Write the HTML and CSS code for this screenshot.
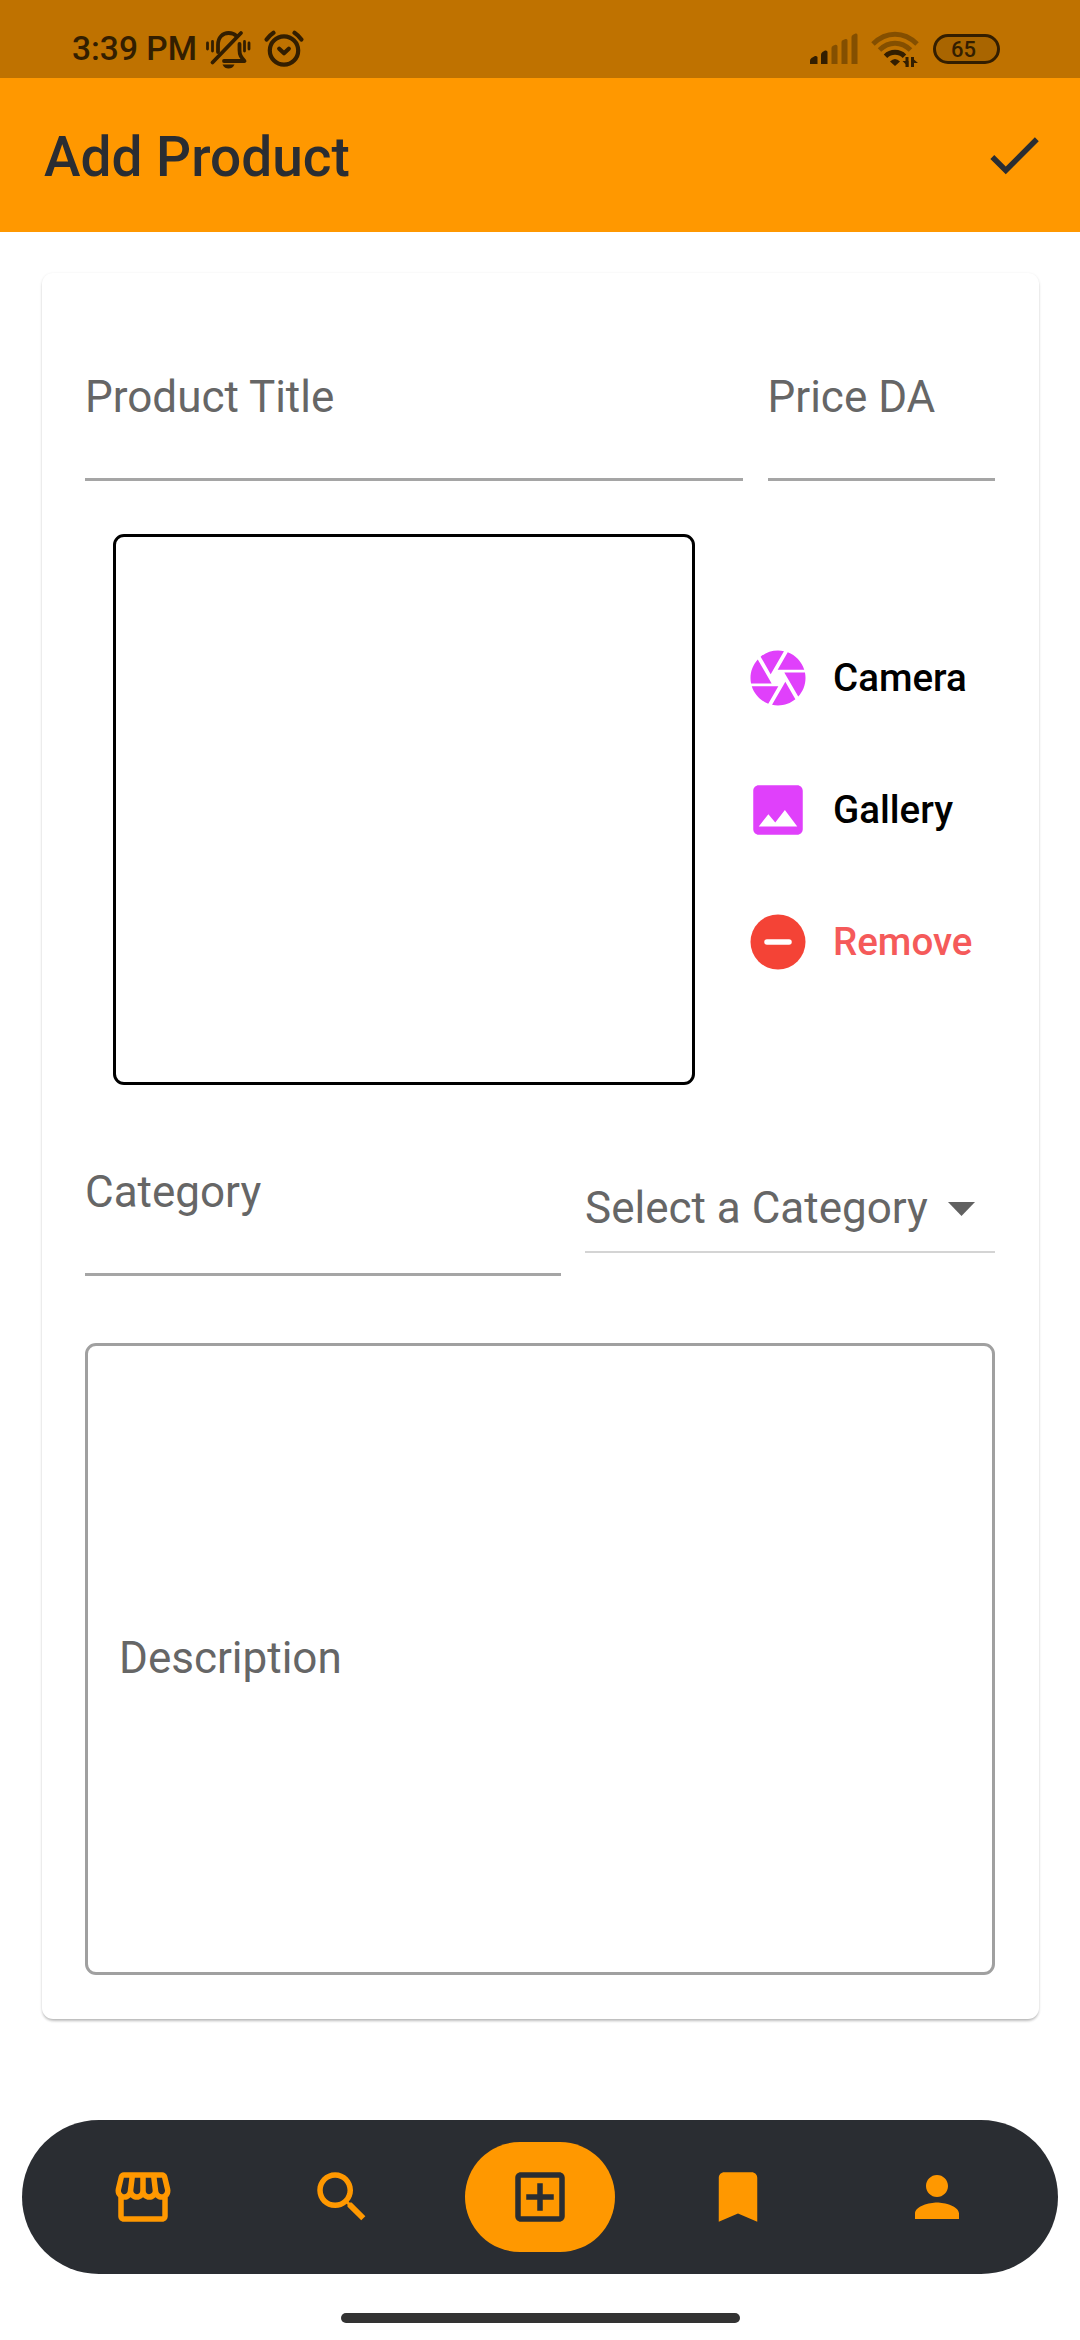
FILE: index.html
```html
<!DOCTYPE html>
<html lang="en">
<head>
<meta charset="utf-8">
<title>Add Product</title>
<link rel="stylesheet" href="styles.css">
</head>
<body>
<div class="screen">
  <header>
    <div class="status">
      <span class="time">3:39 PM</span>
      <svg class="mute" width="46" height="40" viewBox="0 0 46 40" fill="none" stroke="currentColor" stroke-width="3.8" stroke-linecap="round">
        <path d="M7.5 33.5 36 4"/>
        <path d="M13 23V16C13 8 18 4 23.500 4C27 4 29.500 5 31.500 7"/>
        <path d="M34.500 15V21C34.500 26 36 28 39.500 32H19" stroke-linejoin="round"/>
        <path d="M17.500 35.500H29.500C28 38.500 26 39.500 23.500 39.500S19 38.500 17.500 35.500Z" fill="currentColor" stroke="none"/>
        <path d="M2.500 14V20M7.500 12.500V22M39.500 12.500V22M44 14V20" stroke-width="2.800"/>
      </svg>
      <svg class="alarm" width="40" height="38" viewBox="0 0 40 38" fill="none" stroke="currentColor" stroke-width="4.200" stroke-linecap="round" stroke-linejoin="round">
        <circle cx="20" cy="20.500" r="14.200"/>
        <path d="M2.600 9.500Q5.500 5.500 9.500 2.800M37.400 9.500Q34.500 5.500 30.500 2.800"/>
        <path d="M15.200 18.800 20 23.300 24.800 18.800"/>
      </svg>
      <span class="spacer"></span>
      <svg class="signal" width="48" height="32" viewBox="0 0 48 32" fill="currentColor">
        <path d="M0 31V27.500Q0 26 1.500 25L5 23Q7.500 22.500 7.500 24.500V31Z"/>
        <path d="M11 31V21.500Q11 20 12.500 19L15 17.500Q17.500 17 17.500 19V31Z"/>
        <path opacity=".42" d="M21.500 31V15Q21.500 13.500 23 12.800L25.500 11.800Q27.500 11.500 27.500 13.500V31ZM31.500 31V9Q31.500 7.500 33 7L35.500 6Q37.500 5.500 37.500 7.500V31ZM41.500 31V4Q41.500 2.500 43 1.800L45.500.6Q47.500 0 47.500 2V31Z"/>
      </svg>
      <svg class="wifi" width="48" height="36" viewBox="0 0 48 36" fill="none" stroke="currentColor" stroke-width="5">
        <path opacity=".42" d="M2 13Q12 3.300 24 3.300T46 13M8.500 19Q15.500 12.300 24 12.300T39.500 19"/>
        <path d="M14.500 25.200Q18.500 21.300 24 21.300T33.500 25.200"/>
        <path d="M19 30.500Q24 25.500 29 30.500L24 35Z" fill="currentColor" stroke="none"/>
        <path d="M36 26V36M41.500 26V36" stroke-width="3"/>
        <path d="M37.500 36 31.500 30H37.500ZM40 26 47 32H40Z" fill="currentColor" stroke="none"/>
      </svg>
      <span class="battery">65</span>
    </div>
    <div class="appbar">
      <h1>Add Product</h1>
      <svg class="icon" viewBox="0 0 24 24"><path d="M9 16.170 4.830 12l-1.420 1.410L9 19 21 7l-1.410-1.410z"/></svg>
    </div>
  </header>

  <main class="card">
    <div class="row">
      <div class="field title">Product Title</div>
      <div class="field price">Price DA</div>
    </div>
    <div class="media">
      <div class="preview"></div>
      <div class="actions">
        <div class="action">
          <svg class="icon pink" viewBox="0 0 24 24"><path d="M9.400 10.500l4.770-8.260C13.470 2.090 12.750 2 12 2c-2.400 0-4.600.85-6.320 2.250l3.660 6.350.06-.1zM21.540 9c-.92-2.920-3.150-5.260-6-6.340L11.880 9h9.660zm.26 1h-7.490l.29.5 4.760 8.250C21 16.970 22 14.610 22 12c0-.69-.07-1.350-.2-2zM8.540 12l-3.900-6.750C3.010 7.030 2 9.390 2 12c0 .69.07 1.350.2 2h7.490l-1.150-2zm-6.080 3c.92 2.920 3.150 5.260 6 6.340L12.120 15H2.460zm11.270 0l-3.900 6.760c.7.15 1.420.24 2.170.24 2.400 0 4.600-.85 6.320-2.250l-3.660-6.350-.93 1.600z"/></svg>
          <span>Camera</span>
        </div>
        <div class="action">
          <svg class="icon pink" viewBox="0 0 24 24"><path d="M21 19V5c0-1.100-.9-2-2-2H5c-1.100 0-2 .9-2 2v14c0 1.100.9 2 2 2h14c1.100 0 2-.9 2-2zM8.500 13.500l2.500 3.010L14.500 12l4.500 6H5l3.500-4.500z"/></svg>
          <span>Gallery</span>
        </div>
        <div class="action remove">
          <svg class="icon red" viewBox="0 0 24 24"><circle cx="12" cy="12" r="10"/><rect x="7" y="11" width="10" height="2" rx="1" fill="#fff"/></svg>
          <span>Remove</span>
        </div>
      </div>
    </div>
    <div class="row category-row">
      <div class="field category">Category</div>
      <div class="select"><span>Select a Category</span><svg width="27" height="14" viewBox="0 0 27 14"><path d="M0 0H27L13.500 14Z"/></svg></div>
    </div>
    <div class="description">Description</div>
  </main>

  <nav>
    <a class="tab"><svg class="icon" viewBox="0 0 24 24"><path d="M21.900 8.890l-1.050-4.370c-.22-.9-1-1.520-1.910-1.520H5.050c-.9 0-1.690.63-1.900 1.520L2.100 8.890c-.24 1.020-.02 2.060.62 2.880.08.11.19.19.28.29V19c0 1.100.9 2 2 2h14c1.100 0 2-.9 2-2v-6.940c.09-.09.2-.18.28-.28.64-.82.87-1.870.62-2.890zm-2.990-3.900l1.050 4.370c.1.42.01.84-.25 1.170-.14.18-.44.47-.94.47-.61 0-1.140-.49-1.210-1.140L16.980 5l1.930-.01zM13 5h1.960l.54 4.520c.05.39-.07.78-.33 1.070-.22.26-.54.41-.95.41-.67 0-1.220-.59-1.220-1.310V5zM8.490 9.520L9.040 5H11v4.690c0 .72-.55 1.310-1.290 1.310-.34 0-.65-.15-.89-.41-.25-.29-.37-.68-.33-1.070zm-4.450-.16L5.050 5h1.970l-.58 4.860c-.08.65-.6 1.140-1.210 1.140-.49 0-.8-.29-.93-.47-.27-.32-.36-.75-.26-1.170zM5 19v-6.030c.08.01.15.03.23.03.87 0 1.660-.36 2.240-.95.6.6 1.400.95 2.310.95.87 0 1.650-.36 2.230-.93.59.57 1.390.93 2.290.93.84 0 1.640-.35 2.240-.95.58.59 1.370.95 2.240.95.08 0 .15-.02.23-.03V19H5z"/></svg></a>
    <a class="tab"><svg class="icon" viewBox="0 0 24 24"><path d="M15.500 14h-.79l-.28-.27C15.410 12.590 16 11.110 16 9.500 16 5.910 13.090 3 9.500 3S3 5.910 3 9.500 5.910 16 9.500 16c1.610 0 3.090-.59 4.230-1.570l.27.28v.79l5 4.990L20.490 19l-4.990-5zm-6 0C7.010 14 5 11.990 5 9.500S7.010 5 9.500 5 14 7.010 14 9.500 11.990 14 9.500 14z"/></svg></a>
    <a class="tab active"><svg class="icon" viewBox="0 0 24 24"><path d="M19 3H5c-1.110 0-2 .9-2 2v14c0 1.100.89 2 2 2h14c1.100 0 2-.9 2-2V5c0-1.100-.9-2-2-2zm0 16H5V5h14v14zm-8-2h2v-4h4v-2h-4V7h-2v4H7v2h4z"/></svg></a>
    <a class="tab"><svg class="icon" viewBox="0 0 24 24"><path d="M17 3H7c-1.100 0-1.990.9-1.990 2L5 21l7-3 7 3V5c0-1.100-.9-2-2-2z"/></svg></a>
    <a class="tab"><svg class="icon" viewBox="0 0 24 24"><path d="M12 12c2.210 0 4-1.790 4-4s-1.790-4-4-4-4 1.790-4 4 1.790 4 4 4zm0 2c-2.670 0-8 1.340-8 4v2h16v-2c0-2.660-5.330-4-8-4z"/></svg></a>
  </nav>
  <div class="handle"></div>
</div>
</body>
</html>
```
FILE: styles.css
```css
* { box-sizing: border-box; }

body {
  margin: 0;
  background: #fff;
  font-family: Roboto, sans-serif;
}

.screen {
  width: 1080px;
  height: 2340px;
  display: flex;
  flex-direction: column;
  overflow: hidden;
}

svg { display: block; flex: none; }

.icon { width: 66px; height: 66px; fill: currentColor; }

.status {
  height: 78px;
  padding: 19px 80px 0 72px;
  display: flex;
  align-items: center;
  background: #bf7200;
  color: #331e00;
}
.time { width: 126px; padding-top: 1px; font-size: 33.500px; font-weight: 500; line-height: 40px; white-space: nowrap; }
.mute { margin-left: 7px; }
.alarm { margin-left: 13px; }
.spacer { flex: 1; }
.wifi { margin-left: 13px; }
.battery {
  width: 67px;
  height: 30px;
  margin-left: 14px;
  padding-right: 6px;
  border: 3px solid #331e00;
  border-radius: 15px;
  background: #a96500;
  font-size: 22px;
  font-weight: 500;
  line-height: 25px;
  text-align: center;
}

.appbar {
  height: 154px;
  padding: 0 33px 0 44px;
  display: flex;
  align-items: center;
  justify-content: space-between;
  background: #ff9800;
  color: #2a2d32;
}
h1 { margin: 0; padding-top: 3px; font-size: 55px; font-weight: 500; line-height: 64px; }

.card {
  width: 997px;
  height: 1746px;
  margin: 41px 41px 0 42px;
  padding: 98px 44px 44px 43px;
  border-radius: 11px;
  background: #fff;
  box-shadow: 0 3px 3px -1px rgba(0,0,0,.2), 0 1px 3px rgba(0,0,0,.14);
  color: #666;
  font-size: 44px;
  line-height: 52px;
  display: flex;
  flex-direction: column;
}

.row { display: flex; gap: 24.500px; }
.field { height: 110px; border-bottom: 3px solid #a5a5a5; white-space: nowrap; }
.title { flex: 1; }
.price { width: 227.500px; }

.media { display: flex; margin: 53px 0 0 28px; }
.preview {
  width: 582px;
  height: 551px;
  border: 3px solid #000;
  border-radius: 11px;
}
.actions {
  margin-left: 50px;
  display: flex;
  flex-direction: column;
  justify-content: center;
}
.action {
  height: 132px;
  display: flex;
  align-items: center;
  gap: 22px;
  color: #000;
  font-size: 38.500px;
  font-weight: 500;
}
.pink { color: #e040fb; }
.red { color: #f44336; }
.remove { color: #f55a5a; }

.category-row { margin-top: 81px; }
.category { flex: 1; }
.select {
  width: 410px;
  height: 71px;
  margin-top: 16px;
  padding-right: 20px;
  border-bottom: 2px solid #d4d4d4;
  display: flex;
  align-items: flex-start;
  justify-content: space-between;
}
.select svg { margin-top: 20px; fill: #616161; }

.description {
  flex: 1;
  margin: 67px 0 0;
  padding: 0 0 3px 31px;
  border: 3px solid #a0a0a0;
  border-radius: 11px;
  display: flex;
  align-items: center;
}

nav {
  height: 154px;
  margin: 101px 22px 0;
  padding: 0 22px;
  border-radius: 77px;
  display: flex;
  align-items: center;
  justify-content: space-around;
  background: #2a2d32;
}
.tab {
  width: 150px;
  height: 110px;
  border-radius: 55px;
  display: flex;
  align-items: center;
  justify-content: center;
  color: #ff9800;
}
.active { background: #ff9800; color: #2a2d32; }

.handle {
  width: 399px;
  height: 10px;
  margin: 39px auto 0;
  border-radius: 5px;
  background: #333;
}
```
